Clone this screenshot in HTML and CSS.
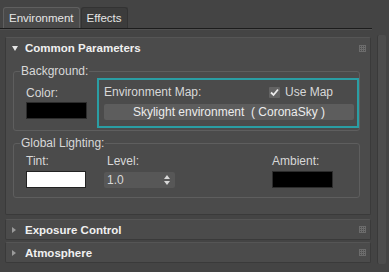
FILE: index.html
```html
<!DOCTYPE html>
<html lang="en">
<head>
    <meta charset="UTF-8">
    <title>Environment and Effects</title>
    <link rel="stylesheet" href="styles.css">
</head>
<body>
    <div class="window">
        <div class="main">
            <div class="tabs">
                <div class="tab active">Environment</div>
                <div class="tab">Effects</div>
            </div>

            <div class="rollouts">
                <!-- common parameters -->
                <div class="rollout open">
                    <div class="rollout-head">
                        <span class="arrow down"></span>
                        <span class="rollout-title">Common Parameters</span>
                        <span class="grip"></span>
                    </div>
                    <div class="rollout-body">
                        <div class="group bg-group">
                            <div class="group-label">Background:</div>
                            <div class="bg-row">
                                <div class="field color-field">
                                    <div class="label">Color:</div>
                                    <div class="swatch black"></div>
                                </div>
                                <div class="envmap">
                                    <div class="envmap-top">
                                        <span class="label">Environment Map:</span>
                                        <span class="check">
                                            <span class="box">
                                                <svg width="9" height="9" viewBox="0 0 9 9"><path d="M1 4.5 L3.5 7 L8 1.5" fill="none" stroke="#ececec" stroke-width="1.8"/></svg>
                                            </span>
                                            Use Map
                                        </span>
                                    </div>
                                    <div class="map-button">Skylight environment&nbsp; ( CoronaSky )</div>
                                </div>
                            </div>
                        </div>

                        <div class="group gl-group">
                            <div class="group-label">Global Lighting:</div>
                            <div class="gl-row">
                                <div class="field tint-field">
                                    <div class="label">Tint:</div>
                                    <div class="swatch white"></div>
                                </div>
                                <div class="field level-field">
                                    <div class="label">Level:</div>
                                    <div class="spinner">
                                        <span>1.0</span>
                                        <svg width="6" height="10" viewBox="0 0 6 10"><path d="M3 0 L6 4 L0 4 Z M0 6 L6 6 L3 10 Z" fill="#d8d8d8"/></svg>
                                    </div>
                                </div>
                                <div class="field ambient-field">
                                    <div class="label">Ambient:</div>
                                    <div class="swatch black"></div>
                                </div>
                            </div>
                        </div>
                    </div>
                </div>

                <div class="rollout">
                    <div class="rollout-head">
                        <span class="arrow right"></span>
                        <span class="rollout-title">Exposure Control</span>
                        <span class="grip"></span>
                    </div>
                </div>

                <div class="rollout">
                    <div class="rollout-head">
                        <span class="arrow right"></span>
                        <span class="rollout-title">Atmosphere</span>
                        <span class="grip"></span>
                    </div>
                </div>
            </div>
        </div>
        <div class="scrollbar"></div>
    </div>
</body>
</html>
```

FILE: styles.css
```css
body{
    margin: 0;
    background-color: #444444;
    font-family: 'Liberation Sans', Arial, sans-serif;
    font-size: 12px;
    color: #d8d8d8;
}

.window{
    display: flex;
    height: 272px;
}

.main{
    flex: 1;
}

.scrollbar{
    width: 8px;
    margin: 35px 3px 8px 5px;
    background-color: #4d4d4d;
    border-left: 1px solid #3a3a3a;
    border-radius: 2px;
}

/* tabs */
.tabs{
    display: flex;
    padding: 7px 0 0 3px;
    height: 21px;
    border-bottom: 1px solid #1c1c1c;
    box-shadow: 0 1px 0 #505050;
}

.tab{
    padding: 4px 5px 0 5px;
    margin-right: 1px;
    border: 1px solid #333;
    border-bottom: none;
    border-radius: 3px 3px 0 0;
    background-color: #3c3c3c;
    color: #e6e6e6;
    font-size: 11.5px;
}

.tab.active{
    background-color: #4a4a4a;
    border-color: #5f5f5f;
}

/* rollouts */
.rollouts{
    padding: 8px 1px 0 5px;
}

.rollout{
    background-color: #4b4b4b;
    border: 1px solid #3a3a3a;
    border-top-color: #555;
    border-radius: 2px;
    margin-bottom: 2px;
}

.rollout.open{
    margin-bottom: 4px;
}

.rollout-head{
    display: flex;
    align-items: center;
    height: 19px;
}

.rollout.open .rollout-head{
    height: 20px;
}

.rollout-title{
    flex: 1;
    font-weight: bold;
    color: #f0f0f0;
    font-size: 11.5px;
}

.arrow{
    width: 0;
    height: 0;
}

.arrow.down{
    margin: 0 7px 0 6px;
    border-left: 3px solid transparent;
    border-right: 3px solid transparent;
    border-top: 5px solid #e6e6e6;
}

.arrow.right{
    margin: 0 9px 0 6px;
    border-top: 3px solid transparent;
    border-bottom: 3px solid transparent;
    border-left: 4px solid #9a9a9a;
}

.grip{
    width: 7px;
    height: 7px;
    margin-right: 4px;
    background-image: repeating-linear-gradient(90deg, #6c6c6c 0 1px, transparent 1px 2px),
                      repeating-linear-gradient(0deg, #6c6c6c 0 1px, transparent 1px 2px);
}

.rollout-body{
    padding: 0 10px 16px 7px;
}

/* group boxes */
.group{
    position: relative;
    border: 1px solid #5e5e5e;
    border-radius: 3px;
}

.group-label{
    position: absolute;
    top: -7px;
    left: 6px;
    padding: 0 1px;
    background-color: #4b4b4b;
    line-height: 12px;
}

.bg-group{
    margin-top: 13px;
    height: 58px;
}

.gl-group{
    margin-top: 12px;
    height: 53px;
}

.bg-row{
    display: flex;
    padding: 6px 0 0 12px;
}

.label{
    line-height: 14px;
}

.color-field{
    padding-top: 8px;
    width: 71px;
}

.swatch{
    margin-top: 2px;
    height: 17px;
    width: 61px;
    border: 1px solid #2c2c2c;
    box-sizing: border-box;
}

.swatch.black{
    background-color: #000;
}

.swatch.white{
    background-color: #fff;
    border-color: #222;
    margin-top: 3px;
    width: 60px;
}

.envmap{
    width: 250px;
    height: 46px;
    border: 2px solid #2a9ea4;
    padding: 0 3px 0 5px;
}

.envmap-top{
    display: flex;
    justify-content: space-between;
    align-items: center;
    height: 24px;
}

.check{
    display: flex;
    align-items: center;
    margin-right: 21px;
}

.box{
    display: inline-flex;
    align-items: center;
    justify-content: center;
    width: 11px;
    height: 11px;
    margin-right: 5px;
    background-color: #636363;
    border-radius: 1px;
}

.map-button{
    height: 16px;
    line-height: 16px;
    text-align: center;
    background-color: #5d5d5d;
    border-radius: 2px;
    color: #ececec;
}

.gl-row{
    display: flex;
    padding: 10px 0 0 12px;
}

.tint-field{
    width: 78px;
}

.level-field{
    width: 168px;
}

.level-field .label{
    padding-left: 3px;
}

.spinner{
    display: flex;
    justify-content: space-between;
    align-items: center;
    margin-top: 4px;
    width: 71px;
    height: 16px;
    padding: 0 5px 0 3px;
    box-sizing: border-box;
    background-color: #575757;
    border-radius: 2px;
}

.ambient-field .swatch{
    margin-top: 3px;
}
```
